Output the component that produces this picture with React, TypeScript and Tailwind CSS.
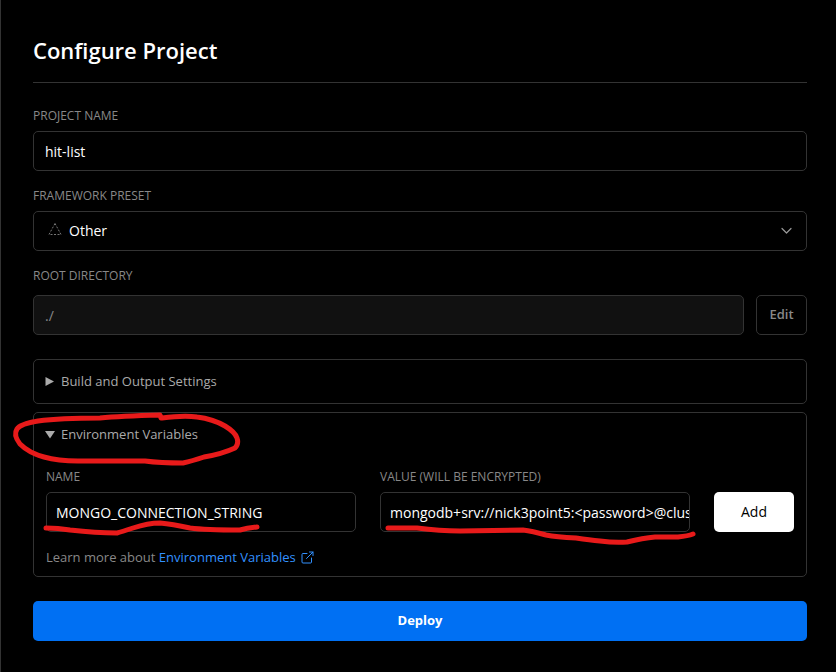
import type { ReactNode } from 'react';

const fieldClass =
  'block h-10 w-full rounded-[5px] border border-[#333] bg-black text-sm text-white outline-none';

function FieldLabel({ htmlFor, children }: { htmlFor: string; children: ReactNode }) {
  return (
    <label htmlFor={htmlFor} className="block h-4 text-xs leading-[18px] text-[#888] uppercase">
      {children}
    </label>
  );
}

function Triangle({ open }: { open?: boolean }) {
  return (
    <svg width="10" height="9" viewBox="0 0 10 9" fill="#aaa" aria-hidden="true">
      {open ? <path d="M0 1h10L5 8.500z" /> : <path d="M0.500 0v9L9 4.500z" />}
    </svg>
  );
}

function Marks() {
  return (
    <svg
      className="pointer-events-none absolute top-0 -left-px"
      width="836"
      height="672"
      viewBox="0 0 836 672"
      fill="none"
      stroke="#e81a1a"
      strokeWidth="5"
      strokeLinecap="round"
      strokeLinejoin="round"
      aria-hidden="true"
    >
      <path d="M161 418L160 415Q120 416 100 418Q60 418 38 421Q20 424 17 429Q13 435 20 444Q29 453 44 457Q58 461 78 461L145 461Q160 463 183 463Q192 461 204 457Q222 454 235 448Q239 444 237 438Q235 432 225 426Q213 419 197 417Q184 415 162 418" />
      <path d="M46 528Q58 528 70 530Q96 533 117 533Q121 532 133 528Q148 523 160 523Q172 524 190 528Q205 530 240 530Q247 528 257 527" />
      <path d="M388 528L417 528Q440 531 460 531L523 530Q532 531 546 535Q556 537 576 538Q590 540 600 541Q615 543 627 542Q643 538 655 537L678 537Q688 536 693 534" />
    </svg>
  );
}

export default function App() {
  return (
    <main className="relative min-h-screen border-l border-[#333] bg-black pt-8 pr-[29px] pb-8 pl-8 font-['Open_Sans','Noto_Sans',sans-serif] text-[13px] text-white">
      <h1 className="border-b border-[#333] pb-[14px] text-[22px] leading-9 font-semibold">
        Configure Project
      </h1>

      <form onSubmit={(e) => e.preventDefault()}>
        <div className="mt-6">
          <FieldLabel htmlFor="project">Project Name</FieldLabel>
          <input id="project" defaultValue="hit-list" className={`${fieldClass} mt-2 px-[11px]`} />
        </div>

        <div className="mt-4">
          <FieldLabel htmlFor="framework">Framework Preset</FieldLabel>
          <div className="relative mt-2">
            <select id="framework" className={`${fieldClass} appearance-none pr-10 pl-[35px]`}>
              <option>Other</option>
            </select>
            <svg
              className="pointer-events-none absolute top-3 left-[15px]"
              width="14"
              height="13"
              viewBox="0 0 14 13"
              fill="none"
              stroke="#777"
              strokeDasharray="2 1.5"
              aria-hidden="true"
            >
              <path d="M7 0.500L13 11.500H1Z" />
            </svg>
            <svg
              className="pointer-events-none absolute top-4 right-[15px]"
              width="11"
              height="8"
              viewBox="0 0 11 8"
              fill="none"
              stroke="#999"
              strokeWidth="1.2"
              strokeLinecap="round"
              strokeLinejoin="round"
              aria-hidden="true"
            >
              <path d="M1 1.500L5.500 6L10 1.500" />
            </svg>
          </div>
        </div>

        <div className="mt-4">
          <FieldLabel htmlFor="root-dir">Root Directory</FieldLabel>
          <div className="mt-3 flex gap-3">
            <input
              id="root-dir"
              readOnly
              value="./"
              className="h-10 min-w-0 flex-1 rounded-[5px] border border-[#333] bg-[#111] px-[11px] text-sm text-[#888] outline-none"
            />
            <button
              type="button"
              className="h-10 w-[51px] rounded-[5px] border border-[#333] font-semibold text-[#888]"
            >
              Edit
            </button>
          </div>
        </div>

        <details className="mt-6 rounded-[5px] border border-[#333] px-[11px]">
          <summary className="flex h-[43px] list-none items-center gap-[6px] text-[#aaa]">
            <Triangle />
            Build and Output Settings
          </summary>
        </details>

        <details open className="mt-2 rounded-[5px] border border-[#333] px-3">
          <summary className="-ml-px flex h-[43px] list-none items-center gap-[6px] text-[#aaa]">
            <Triangle open />
            Environment Variables
          </summary>
          <div className="mt-3 grid grid-cols-[1fr_1fr_80px] items-end gap-6">
            <div>
              <FieldLabel htmlFor="env-name">Name</FieldLabel>
              <input
                id="env-name"
                defaultValue="MONGO_CONNECTION_STRING"
                className={`${fieldClass} mt-2 pl-[9px]`}
              />
            </div>
            <div>
              <FieldLabel htmlFor="env-value">Value (Will be encrypted)</FieldLabel>
              <input
                id="env-value"
                defaultValue="mongodb+srv://nick3point5:<password>@cluster0"
                className={`${fieldClass} mt-2 pl-[9px]`}
              />
            </div>
            <button
              type="button"
              className="h-10 rounded-[5px] bg-white text-sm font-medium text-black"
            >
              Add
            </button>
          </div>
          <p className="mt-4 mb-[10px] leading-[18px] text-[#888]">
            Learn more about{' '}
            <a href="#env" className="inline-flex items-center gap-[5px] text-[#3291ff]">
              Environment Variables
              <svg
                width="13"
                height="13"
                viewBox="0 0 13 13"
                fill="none"
                stroke="currentColor"
                strokeLinecap="round"
                strokeLinejoin="round"
                aria-hidden="true"
              >
                <path d="M10.500 7V11a1 1 0 0 1-1 1H2a1 1 0 0 1-1-1V3.500a1 1 0 0 1 1-1H6M8.500 1H12V4.500M5.500 7.500L12 1" />
              </svg>
            </a>
          </p>
        </details>

        <button
          type="submit"
          className="mt-6 block h-10 w-full rounded-[5px] bg-[#0070f3] font-bold text-white"
        >
          Deploy
        </button>
      </form>
      <Marks />
    </main>
  );
}
